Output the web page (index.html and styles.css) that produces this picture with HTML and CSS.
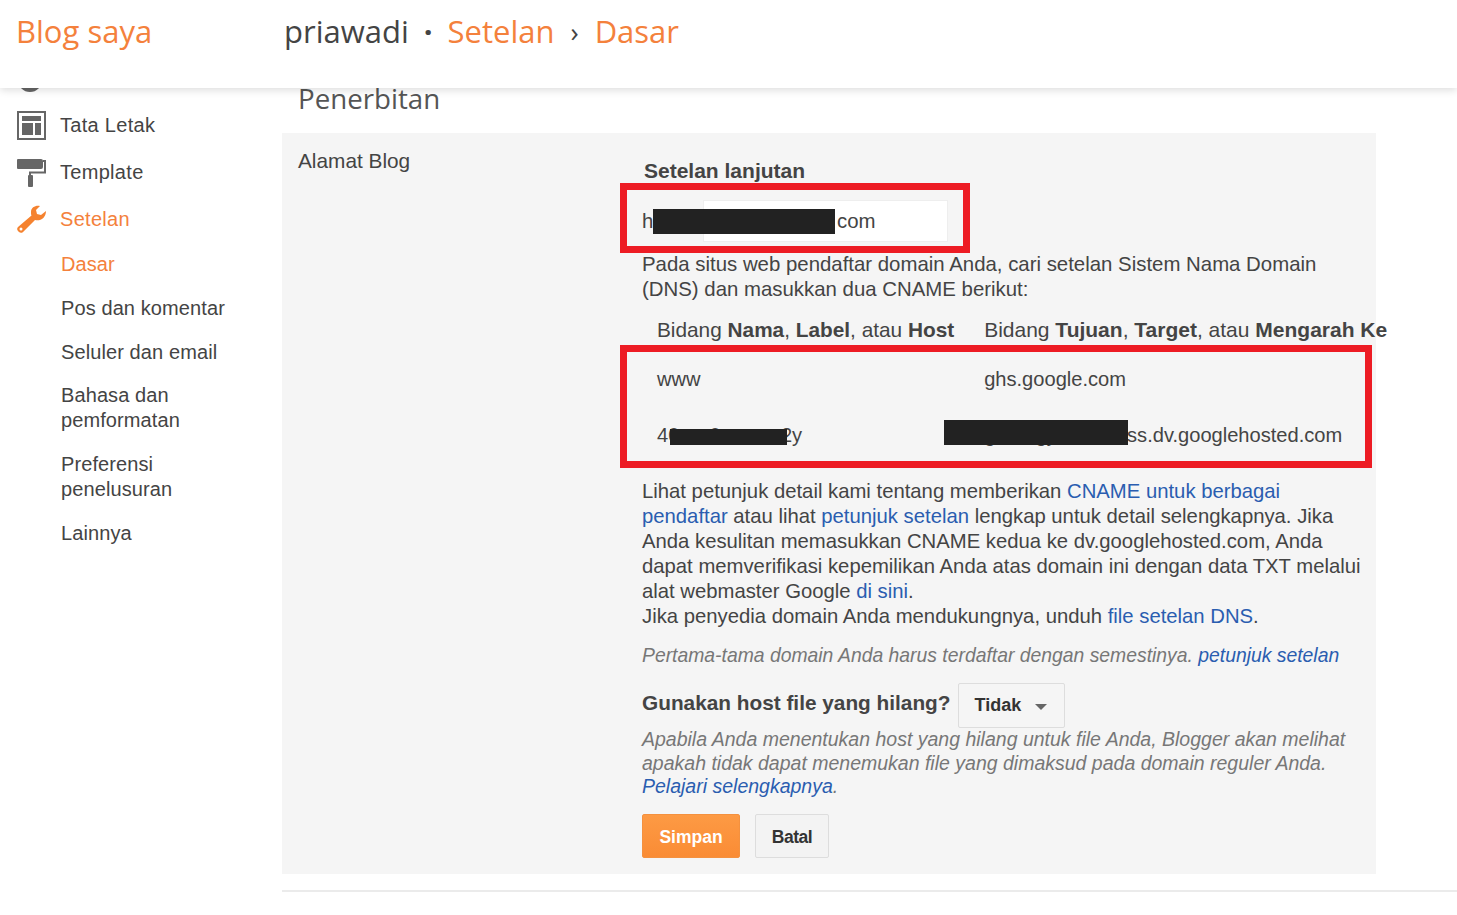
FILE: index.html
```html
<!DOCTYPE html>
<html lang="id">
<head>
  <meta charset="UTF-8" />
  <title>Blog saya - Setelan Dasar</title>
  <link rel="stylesheet" href="styles.css">
</head>
<body>
  <header class="topbar">
    <div class="brand">Blog saya</div>
    <div class="crumbs">
      <span class="crumb-user">priawadi</span>
      <span class="crumb-dot">·</span>
      <span class="crumb-link">Setelan</span>
      <span class="crumb-sep">›</span>
      <span class="crumb-link">Dasar</span>
    </div>
  </header>

  <div class="page">
    <nav class="sidebar">
      <div class="nav-peek"><svg width="24" height="24" viewBox="0 0 24 24"><circle cx="12" cy="12" r="12" fill="#666"/></svg></div>
      <div class="nav-item">
        <svg class="nav-icon" width="30" height="30" viewBox="0 0 30 30">
          <rect x="1" y="1" width="27" height="27" fill="none" stroke="#666" stroke-width="2"/>
          <rect x="5" y="5" width="19" height="5" fill="#666"/>
          <rect x="5" y="12" width="11" height="12" fill="#666"/>
          <rect x="18" y="12" width="6" height="12" fill="#666"/>
        </svg>
        Tata Letak
      </div>
      <div class="nav-item">
        <svg class="nav-icon" width="30" height="30" viewBox="0 0 30 30">
          <path d="M0 2a1 1 0 0 1 1-1h23a2 2 0 0 1 2 2v6a2 2 0 0 1-2 2H1a1 1 0 0 1-1-1z" fill="#666"/>
          <path d="M26 3h2v11.500H13V18" fill="none" stroke="#666" stroke-width="2"/>
          <rect x="11" y="17" width="5" height="12" rx="1" fill="#666"/>
        </svg>
        Template
      </div>
      <div class="nav-item nav-active">
        <svg class="nav-icon" width="30" height="30" viewBox="0 0 30 30">
          <path d="M29 6l-5 4-4-1-1-4 4-4c-4-1-9 1-9 6 0 1.500 0 2.500.5 3.500L1 22c-1.200 1.200-1 3 0 4l1 1c1 1 2.800 1.200 4 0l12-12c5 1.500 11-2 11-9z" fill="#f5822f"/>
          <circle cx="4" cy="24" r="1.500" fill="#fff"/>
        </svg>
        Setelan
      </div>
      <ul class="subnav">
        <li class="subnav-active">Dasar</li>
        <li>Pos dan komentar</li>
        <li>Seluler dan email</li>
        <li>Bahasa dan<br>pemformatan</li>
        <li>Preferensi<br>penelusuran</li>
        <li>Lainnya</li>
      </ul>
    </nav>

    <main class="content">
      <h1 class="section-title">Penerbitan</h1>
      <section class="card">
        <div class="card-label">Alamat Blog</div>
        <div class="card-body">
          <h3 class="adv-title">Setelan lanjutan</h3>
          <div class="domain-row">
            <span class="domain-prefix">h</span>
            <div class="domain-input">com</div>
          </div>
          <p class="dns-intro">Pada situs web pendaftar domain Anda, cari setelan Sistem Nama Domain (DNS) dan masukkan dua CNAME berikut:</p>

          <table class="cname-table">
            <tr>
              <th>Bidang <b>Nama</b>, <b>Label</b>, atau <b>Host</b></th>
              <th>Bidang <b>Tujuan</b>, <b>Target</b>, atau <b>Mengarah Ke</b></th>
            </tr>
            <tr><td>www</td><td>ghs.google.com</td></tr>
            <tr><td>40xxx0xxxxxx2y</td><td>gxxxxgyxxxxxxxss.dv.googlehosted.com</td></tr>
          </table>

          <p class="dns-help">Lihat petunjuk detail kami tentang memberikan <a>CNAME untuk berbagai pendaftar</a> atau lihat <a>petunjuk setelan</a> lengkap untuk detail selengkapnya. Jika Anda kesulitan memasukkan CNAME kedua ke dv.googlehosted.com, Anda dapat memverifikasi kepemilikan Anda atas domain ini dengan data TXT melalui alat webmaster Google <a>di sini</a>.<br>Jika penyedia domain Anda mendukungnya, unduh <a>file setelan DNS</a>.</p>
          <p class="note note-first">Pertama-tama domain Anda harus terdaftar dengan semestinya. <a>petunjuk setelan</a></p>

          <div class="missing-row">
            <span class="missing-label">Gunakan host file yang hilang?</span>
            <div class="select-btn">Tidak <span class="caret"></span></div>
          </div>
          <p class="note note-missing">Apabila Anda menentukan host yang hilang untuk file Anda, Blogger akan melihat apakah tidak dapat menemukan file yang dimaksud pada domain reguler Anda. <a>Pelajari selengkapnya</a>.</p>

          <div class="actions">
            <button class="btn btn-primary">Simpan</button>
            <button class="btn btn-cancel">Batal</button>
          </div>
        </div>

        <!-- kotak merah dan sensor di atas screenshot -->
        <div class="mark mark-domain"></div>
        <div class="mark mark-cname"></div>
        <div class="redact redact-domain"></div>
        <div class="redact redact-name"></div>
        <div class="redact redact-target"></div>
      </section>
      <div class="bottom-line"></div>
    </main>
  </div>
</body>
</html>
```

FILE: styles.css
```css
* {
  box-sizing: border-box;
}
html, body {
  margin: 0;
  height: 100%;
  overflow: hidden;
}
body {
  font-family: "Liberation Sans", Arial, sans-serif;
  font-size: 20.4px;
  color: #444;
  background: #fff;
}
.topbar {
  height: 88px;
  display: flex;
  align-items: center;
  padding: 0 0 26px 16px;
  background: #fff;
  box-shadow: 0 2px 8px rgba(0, 0, 0, 0.14);
  font-family: "Open Sans", sans-serif;
  font-size: 31px;
  position: relative;
  z-index: 2;
}
.brand {
  width: 268px;
  color: #f4813c;
}
.crumbs {
  display: flex;
  align-items: center;
  color: #444;
}
.crumb-dot {
  margin: 0 15px 0 15px;
  font-weight: 700;
}
.crumb-sep {
  margin: 0 16px 0 16px;
  font-size: 27px;
}
.crumb-link {
  color: #f4813c;
}
.page {
  display: flex;
  height: 827px;
}
.sidebar {
  width: 282px;
  flex: none;
  padding-left: 17px;
  font-size: 20px;
}
.nav-peek {
  height: 4px;
  overflow: hidden;
  display: flex;
  align-items: flex-end;
  margin-left: 1px;
  margin-bottom: 10px;
}
.nav-item {
  height: 47px;
  display: flex;
  align-items: center;
  gap: 13px;
  letter-spacing: 0.3px;
}
.nav-icon {
  flex: none;
}
.nav-active {
  color: #f4813c;
}
.subnav {
  list-style: none;
  margin: 0;
  padding: 9.2px 0 0 44px;
  line-height: 25px;
  letter-spacing: 0.1px;
}
.subnav li {
  margin-bottom: 18.7px;
}
.subnav-active {
  color: #f4813c;
}
.content {
  flex: 1;
  min-width: 0;
}
.section-title {
  margin: 0;
  height: 45px;
  padding: 0 0 0 16px;
  font-family: "Open Sans", sans-serif;
  font-size: 27.7px;
  font-weight: 400;
  line-height: 20px;
  color: #555;
}
.card {
  position: relative;
  width: 1094px;
  height: 741px;
  display: flex;
  background: #f5f5f5;
}
.card-label {
  width: 360px;
  flex: none;
  padding: 15px 0 0 16px;
  line-height: 25px;
  font-size: 20.8px;
}
.card-body {
  flex: 1;
  min-width: 0;
  padding: 25px 8px 0 0;
  line-height: 25px;
}
.adv-title {
  margin: 0 0 0 2px;
  font-size: 21px;
  font-weight: 700;
  line-height: 25px;
}
.domain-row {
  display: flex;
  align-items: center;
  height: 42px;
  margin-top: 17px;
}
.domain-prefix {
  width: 61px;
}
.domain-input {
  width: 245px;
  height: 42px;
  padding: 8px 0 0 133px;
  background: #fff;
  border: 1px solid #eee;
}
.dns-intro {
  margin: 10px 0 0;
}
.cname-table {
  border-collapse: collapse;
  margin: 15px 0 0 15px;
  white-space: nowrap;
}
.cname-table th {
  font-size: 20.8px;
  font-weight: 400;
  text-align: left;
  padding: 0 30px 0 0;
  height: 25px;
}
.cname-table th:nth-child(2) {
  font-size: 21px;
}
.cname-table td {
  font-size: 20.1px;
  padding: 0;
  height: 56px;
  vertical-align: bottom;
}
.cname-table tr:nth-child(2) td {
  height: 50px;
}
.dns-help {
  margin: 31px 0 0;
  font-size: 20.3px;
}
a {
  color: #2a5db0;
}
.note {
  margin: 0;
  font-size: 19.35px;
  font-style: italic;
  color: #777;
}
.note-first {
  margin-top: 14px;
}
.missing-row {
  display: flex;
  align-items: center;
  gap: 7px;
  margin-top: 15px;
}
.missing-label {
  font-weight: 700;
  font-size: 20.8px;
  margin-top: -6px;
}
.select-btn {
  width: 107px;
  height: 45px;
  display: flex;
  align-items: center;
  gap: 14px;
  padding-left: 16px;
  font-size: 18px;
  font-weight: 700;
  color: #333;
  background: #f5f5f5;
  border: 1px solid #ddd;
  border-radius: 2px;
}
.caret {
  width: 0;
  height: 0;
  margin-top: 3px;
  border: 6px solid transparent;
  border-top-color: #666;
  border-bottom: 0;
}
.note-missing {
  font-size: 19.5px;
  line-height: 23.5px;
}
.actions {
  display: flex;
  gap: 15px;
  margin-top: 15px;
}
.btn {
  height: 44px;
  font-family: inherit;
  font-size: 17.5px;
  font-weight: 700;
  border-radius: 2px;
}
.btn-cancel {
  width: 74px;
  padding: 3px 0 0;
  letter-spacing: -0.5px;
  color: #333;
  background: #f3f3f3;
  border: 1px solid #ddd;
}
.btn-primary {
  width: 98px;
  padding: 3px 0 0;
  color: #fff;
  background: linear-gradient(#fd9a44, #fa8c35);
  border: 1px solid #f4913f;
}
.mark {
  position: absolute;
  border: 7px solid #ed1c24;
}
.mark-domain {
  left: 338px;
  top: 50px;
  width: 350px;
  height: 70px;
}
.mark-cname {
  left: 338px;
  top: 212px;
  width: 752px;
  height: 123px;
}
.redact {
  position: absolute;
  background: #222;
}
.redact-domain {
  left: 371px;
  top: 76px;
  width: 182px;
  height: 25px;
}
.redact-name {
  left: 388px;
  top: 296px;
  width: 117px;
  height: 16px;
}
.redact-target {
  left: 662px;
  top: 287px;
  width: 184px;
  height: 25px;
}
.bottom-line {
  height: 2px;
  margin-top: 16px;
  background: #ebebeb;
}
```
